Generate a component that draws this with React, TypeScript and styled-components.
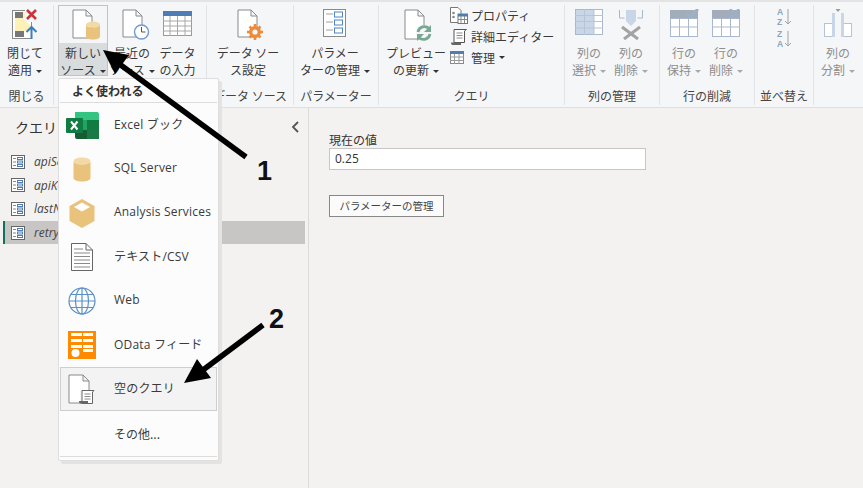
import styled, { createGlobalStyle } from 'styled-components';

const GlobalStyle = createGlobalStyle`
  html, body {
    margin: 0;
    padding: 0;
    background: #f3f2f1;
  }
  * {
    box-sizing: border-box;
  }
`;

const FONT = `"Noto Sans CJK JP", "Noto Sans", sans-serif`;
const LATIN_FONT = `"Open Sans", "Noto Sans CJK JP", sans-serif`;

const Page = styled.div`
  position: relative;
  width: 863px;
  height: 488px;
  overflow: hidden;
  background: #f3f2f1;
  color: #333;
  font-family: ${FONT};
  font-size: 12px;
`;

const Ribbon = styled.div`
  display: flex;
  height: 108px;
  padding: 3px 0 2px;
  background: #f5f6f8;
  border-top: 2px solid #e4e4e4;
  border-bottom: 1px solid #e1dfdd;
`;

const Group = styled.div<{ $width: number; $last?: boolean }>`
  flex: none;
  display: flex;
  flex-direction: column;
  width: ${p => p.$width}px;
  border-right: ${p => (p.$last ? 'none' : '1px solid #e1e3e6')};
`;

const GroupBody = styled.div<{ $pad?: number }>`
  flex: 1;
  display: flex;
  padding-left: ${p => p.$pad ?? 0}px;
`;

const GroupLabel = styled.div`
  height: 20px;
  padding-top: 2px;
  line-height: 18px;
  text-align: center;
  font-size: 12px;
  color: #444;
  white-space: nowrap;
`;

const BigButton = styled.div<{ $width: number; $disabled?: boolean }>`
  flex: none;
  display: flex;
  flex-direction: column;
  align-items: center;
  width: ${p => p.$width}px;
  color: ${p => (p.$disabled ? '#8d8d8d' : '#3a3a3a')};
`;

const IconSlot = styled.div<{ $active?: boolean }>`
  width: 100%;
  height: 38px;
  display: flex;
  align-items: flex-start;
  justify-content: center;
  padding-top: 3px;
  border: 1px solid ${p => (p.$active ? '#c2c2c2' : 'transparent')};
  border-bottom: none;
`;

const ButtonText = styled.div<{ $active?: boolean }>`
  width: 100%;
  height: 33px;
  padding-top: 1px;
  text-align: center;
  line-height: 17px;
  font-size: 12px;
  white-space: nowrap;
  background: ${p => (p.$active ? '#d9dcdc' : 'transparent')};
  border: 1px solid ${p => (p.$active ? '#c2c2c2' : 'transparent')};
  border-top: none;
`;

const Line = styled.div`
  height: 17px;
`;

const Caret = styled.span<{ $disabled?: boolean }>`
  display: inline-block;
  width: 0;
  height: 0;
  margin-left: 4px;
  vertical-align: 2px;
  border-left: 3px solid transparent;
  border-right: 3px solid transparent;
  border-top: 3px solid ${p => (p.$disabled ? '#a8a8a8' : '#333')};
`;

const SmallStack = styled.div`
  flex: none;
  display: flex;
  flex-direction: column;
  width: 112px;
`;

const SmallButton = styled.div`
  display: flex;
  align-items: center;
  height: 21px;
  font-size: 12px;
  color: #3a3a3a;
  white-space: nowrap;
`;

const SmallIcon = styled.span`
  flex: none;
  display: flex;
  width: 21px;
`;

const SortStack = styled.div`
  display: flex;
  flex-direction: column;
  gap: 4px;
  padding: 3px 0 0 22px;
`;

const Body = styled.div`
  display: flex;
  height: 380px;
`;

const Sidebar = styled.div`
  flex: none;
  width: 309px;
  padding: 9px 3px 0;
  border-right: 1px solid #dcdad8;
`;

const SidebarHeader = styled.div`
  display: flex;
  align-items: center;
  justify-content: space-between;
  height: 20px;
  padding: 0 5px 0 12px;
  margin-bottom: 13px;
  font-size: 14px;
  color: #333;
`;

const QueryRow = styled.div<{ $selected?: boolean }>`
  display: flex;
  align-items: center;
  gap: 9px;
  height: 23.6px;
  padding-left: 8px;
  font-size: 12px;
  font-style: italic;
  font-family: "Open Sans", "Noto Sans", sans-serif;
  color: #444;
  background: ${p => (p.$selected ? '#c8c6c4' : 'transparent')};
  box-shadow: ${p => (p.$selected ? 'inset 2px 0 0 #12705c' : 'none')};
`;

const Content = styled.div`
  flex: 1;
  padding: 23px 20px 0;
`;

const FieldLabel = styled.div`
  height: 17px;
  line-height: 17px;
  font-size: 12px;
  color: #333;
`;

const ValueBox = styled.div`
  width: 317px;
  height: 22px;
  padding-left: 5px;
  line-height: 20px;
  font-family: "Open Sans", "Noto Sans", sans-serif;
  font-size: 12px;
  color: #333;
  background: #fff;
  border: 1px solid #c8c6c4;
`;

const ManageButton = styled.div`
  width: 115px;
  height: 22px;
  margin-top: 25px;
  line-height: 20px;
  text-align: center;
  font-size: 10.5px;
  color: #444;
  background: #fbfbfb;
  border: 1px solid #8a8886;
`;

const Menu = styled.div`
  position: absolute;
  left: 58px;
  top: 78px;
  width: 161px;
  height: 383px;
  padding: 1px 1px 0;
  background: #fcfcfc;
  border: 1px solid #dedede;
  border-radius: 2px;
  box-shadow: 3px 3px 0 #e4e3e2;
`;

const MenuHeader = styled.div`
  height: 23px;
  line-height: 21px;
  padding-left: 12px;
  font-weight: 700;
  font-size: 12px;
  color: #333;
  border-bottom: 1px solid #dcdcdc;
`;

const MenuItem = styled.div<{ $hover?: boolean }>`
  display: flex;
  align-items: center;
  height: 44px;
  font-size: 12px;
  color: #3a3a3a;
  white-space: nowrap;
  background: ${p => (p.$hover ? '#f3f3f3' : 'transparent')};
  outline: ${p => (p.$hover ? '1px solid #cfcfcf' : 'none')};
  outline-offset: -1px;
`;

const MenuIcon = styled.div`
  flex: none;
  width: 44px;
  display: flex;
  justify-content: center;
`;

const MenuLabel = styled.span`
  padding: 0 0 3px 10px;
  font-family: ${LATIN_FONT};
  letter-spacing: 0.2px;
`;

const MenuFooter = styled.div`
  display: flex;
  align-items: center;
  height: 46px;
  padding-left: 54px;
  font-size: 12px;
  color: #3a3a3a;
  border-bottom: 1px solid #dcdcdc;
`;

const ArrowLayer = styled.svg`
  position: absolute;
  left: 0;
  top: 0;
  pointer-events: none;
`;

const Callout = styled.div<{ $x: number; $y: number }>`
  position: absolute;
  left: ${p => p.$x}px;
  top: ${p => p.$y}px;
  font-family: "Liberation Sans", Arial, sans-serif;
  font-weight: 700;
  font-size: 27px;
  line-height: 30px;
  color: #111;
`;

const Sheet = ({ w = 28, h = 32 }: { w?: number; h?: number }) => (
  <path
    d={`M1 1H${w - 7}L${w - 1} 7V${h - 1}H1Z M${w - 7} 1V7H${w - 1}`}
    fill="#fff"
    stroke="#8a8a8a"
    strokeWidth="1"
  />
);

const CloseApplyIcon = () => (
  <svg width="26" height="30" viewBox="0 0 26 30">
    <rect x="0.500" y="1.500" width="19" height="28" fill="#fff" stroke="#8a8a8a" />
    <rect x="3" y="3" width="8" height="6" fill="#777" />
    <path d="M3 9h8v0l8 8v5H3Z" fill="#fdf0b8" />
    <path d="M11 3h5v6l-5 0Z" fill="#fdf0b8" />
    <rect x="3" y="22" width="9" height="6" fill="#777" />
    <rect x="13" y="0" width="13" height="13" fill="#f5f6f8" />
    <path d="M15 1l9 9M24 1l-9 9" stroke="#c8353a" strokeWidth="2.600" />
    <path d="M19.500 30V19M14.500 23l5-5 5 5" fill="none" stroke="#3c7fc0" strokeWidth="2" />
  </svg>
);

const NewSourceIcon = () => (
  <svg width="36" height="32" viewBox="-7 0 36 32">
    <Sheet w={21} h={30} />
    <ellipse cx="21" cy="15.500" rx="7" ry="3" fill="#f3d9a4" />
    <path d="M14 15.500v12c0 2 3 3 7 3s7-1 7-3v-12c0 2-3 3-7 3s-7-1-7-3Z" fill="#e9c27c" />
  </svg>
);

const RecentIcon = () => (
  <svg width="36" height="32" viewBox="-8 0 36 32">
    <Sheet w={21} h={29} />
    <circle cx="19.500" cy="23" r="7" fill="#fff" stroke="#6f9ad0" strokeWidth="1.400" />
    <path d="M19.500 18v5h4" fill="none" stroke="#555" />
  </svg>
);

const TableIcon = () => (
  <svg width="29" height="30" viewBox="0 -2 29 30">
    <rect x="0.500" y="0.500" width="28" height="24" fill="#fff" stroke="#9a9a9a" />
    <rect x="0" y="0" width="29" height="5" fill="#4f7cb3" />
    <path d="M0 10h29M0 15h29M0 20h29M7 5v20M14.500 5v20M22 5v20" stroke="#a8a8a8" />
  </svg>
);

const SettingsIcon = () => (
  <svg width="38" height="32" viewBox="-8 0 38 32">
    <Sheet w={21} h={29} />
    <circle cx="18" cy="23" r="4.300" fill="#f5f6f8" stroke="#ed8b3c" strokeWidth="3.400" />
    <path
      d="M18 15v3M18 28v3M10 23h3M23 23h3M12.500 17.500l2 2M21.500 26.500l2 2M23.500 17.500l-2 2M14.500 26.500l-2 2"
      stroke="#ed8b3c"
      strokeWidth="2.600"
    />
  </svg>
);

const ParamIcon = () => (
  <svg width="24" height="29" viewBox="0 0 24 29">
    <rect x="0.500" y="0.500" width="22" height="27" fill="#fff" stroke="#8a8a8a" />
    <path d="M3 5h7M3 13h7M3 21h7" stroke="#a0a0a0" />
    <rect x="11.500" y="3" width="8" height="5" fill="#fff" stroke="#4f86c6" />
    <rect x="11.500" y="11" width="8" height="5" fill="#fff" stroke="#4f86c6" />
    <rect x="11.500" y="19" width="8" height="5" fill="#fff" stroke="#4f86c6" />
  </svg>
);

const RefreshIcon = () => (
  <svg width="36" height="33" viewBox="-6 0 36 33">
    <Sheet w={21} h={31} />
    <circle cx="20" cy="24" r="8" fill="#f5f6f8" />
    <path d="M14 23a6.500 6.500 0 0 1 11-3.500M26 25a6.500 6.500 0 0 1-11 3.500" fill="none" stroke="#76a893" strokeWidth="2.800" />
    <path d="M27 16v7h-7ZM13 32v-7h7Z" fill="#76a893" />
  </svg>
);

const PropertyIcon = () => (
  <svg width="18" height="17" viewBox="0 0 18 17">
    <path d="M0.500 0.500H8L11 3.500V15.500H0.500Z" fill="#fff" stroke="#777" />
    <circle cx="3.500" cy="6" r="1.300" fill="#888" />
    <circle cx="3.500" cy="10" r="1.300" fill="#888" />
    <rect x="8" y="7" width="9.500" height="9.500" fill="#fff" stroke="#777" />
    <rect x="8" y="7" width="9.500" height="2.500" fill="#4f7cb3" />
    <path d="M11 9v7M14.500 9v7M8 12.500h9" stroke="#888" />
  </svg>
);

const ScrollIcon = () => (
  <svg width="18" height="18" viewBox="0 0 18 18">
    <path d="M4 1.500H16.500L14.500 3V14.500H4Z" fill="#fff" stroke="#555" />
    <path d="M6.500 5h6M6.500 7.500h6M6.500 10h6" stroke="#888" />
    <path d="M1 14.500H11V17H2.500C1.500 17 1 16 1 14.500Z" fill="#666" />
  </svg>
);

const SmallTableIcon = () => (
  <svg width="14" height="13" viewBox="0 0 14 13">
    <rect x="0.500" y="0.500" width="13" height="12" fill="#fff" stroke="#888" />
    <rect x="0" y="0" width="14" height="3" fill="#4f7cb3" />
    <path d="M0 6h14M0 9.500h14M4.500 3v10M9 3v10" stroke="#999" />
  </svg>
);

const ChooseColsIcon = () => (
  <svg width="28" height="27" viewBox="0 0 28 27">
    <rect x="0.500" y="0.500" width="27" height="25" fill="#fff" stroke="#a9b8cf" />
    <rect x="1" y="1" width="18" height="24" fill="#c9d6e8" />
    <path d="M0 6.500h28M0 12.500h28M0 19h28M9.500 0v26M19 0v26" stroke="#b7c5d9" />
  </svg>
);

const RemoveColsIcon = () => (
  <svg width="24" height="31" viewBox="0 0 24 31">
    <path d="M0.500 1v8h5M23.500 1v8h-5" fill="none" stroke="#a9b8cf" />
    <path d="M7 1h10v11l-5 5-5-5Z" fill="#c9d6e8" />
    <path d="M3 18l16 12M21 18L5 30" stroke="#a3a3a3" strokeWidth="3" />
  </svg>
);

const RowsIcon = ({ mark }: { mark: 'keep' | 'remove' }) => (
  <svg width="29" height="29" viewBox="0 0 29 29">
    <rect x="0.500" y="9.500" width="27" height="18" fill="#fff" stroke="#a9b8cf" />
    <path d="M0 18h28M9.500 9v18M18.500 9v18" stroke="#a9b8cf" />
    <rect x="0" y="1" width="28" height="8" fill="#a3adba" />
    {mark === 'keep' ? (
      <path d="M16 4l4 4 8-8" fill="none" stroke="#9eb0c6" strokeWidth="3" />
    ) : (
      <path d="M18 0l9 9M27 0l-9 9" stroke="#9eb0c6" strokeWidth="2.400" />
    )}
  </svg>
);

const SortGlyph = ({ top, bottom }: { top: string; bottom: string }) => (
  <svg width="17" height="18" viewBox="0 0 17 18">
    <text x="0" y="7" fontSize="8.500" fontWeight="700" fontFamily="Liberation Sans, sans-serif" fill="#8fa3bd">
      {top}
    </text>
    <text x="0" y="17" fontSize="8.500" fontWeight="700" fontFamily="Liberation Sans, sans-serif" fill="#8fa3bd">
      {bottom}
    </text>
    <path d="M11 1v15M8 13l3 3 3-3" fill="none" stroke="#a0a0a0" />
  </svg>
);

const SplitIcon = () => (
  <svg width="28" height="29" viewBox="0 0 28 29">
    <rect x="0.500" y="14.500" width="8" height="13" fill="#fff" stroke="#b6c3d6" />
    <rect x="19.500" y="14.500" width="8" height="13" fill="#fff" stroke="#b6c3d6" />
    <rect x="8" y="4" width="3" height="24" fill="#c9d6e8" />
    <rect x="17" y="4" width="3" height="24" fill="#c9d6e8" />
    <path d="M11.500 0h5L14 3Z" fill="#9a9a9a" />
  </svg>
);

const QueryIcon = () => (
  <svg width="14" height="14" viewBox="0 0 14 14">
    <rect x="0.500" y="0.500" width="13" height="13" fill="#fff" stroke="#666" />
    <path d="M2 3.500h3M2 7h3M2 10.500h3" stroke="#888" />
    <rect x="6.500" y="2.500" width="5" height="2" fill="#fff" stroke="#4f7cb3" />
    <rect x="6.500" y="6" width="5" height="2" fill="#fff" stroke="#4f7cb3" />
    <rect x="6.500" y="9.500" width="5" height="2" fill="#fff" stroke="#4f7cb3" />
  </svg>
);

const ExcelIcon = () => (
  <svg width="33" height="29" viewBox="0 0 33 29">
    <path d="M9 1h22a2 2 0 0 1 2 2v6H9Z" fill="#33c481" />
    <rect x="9" y="9" width="12" height="10" fill="#21a366" />
    <rect x="21" y="9" width="12" height="10" fill="#107c41" />
    <path d="M9 19h24v7a2 2 0 0 1-2 2H11a2 2 0 0 1-2-2Z" fill="#185c37" />
    <rect x="21" y="19" width="12" height="9" fill="#1a7a47" />
    <rect x="0" y="7" width="17" height="15" rx="1" fill="#107c41" />
    <path d="M5 10.500l6.500 8M11.500 10.500l-6.500 8" stroke="#fff" strokeWidth="2" />
  </svg>
);

const CylinderIcon = () => (
  <svg width="18" height="25" viewBox="0 0 18 25">
    <ellipse cx="9" cy="4" rx="8.500" ry="3.500" fill="#f3d9a4" />
    <path d="M0.500 4v17c0 2 4 3.500 8.500 3.500s8.500-1.500 8.500-3.500V4c0 2-4 3.500-8.500 3.500S0.500 6 0.500 4Z" fill="#e9c27c" />
  </svg>
);

const CubeIcon = () => (
  <svg width="26" height="29" viewBox="0 0 26 29">
    <path d="M13 0l12.500 7v15L13 29 0.500 22V7Z" fill="#e9c27c" />
    <path d="M13 3.500l8 4.500-8 4.500-8-4.500Z" fill="#fff" />
  </svg>
);

const TextFileIcon = () => (
  <svg width="22" height="28" viewBox="0 0 22 28">
    <path d="M0.500 0.500H15L21.500 7V27.500H0.500Z M15 0.500V7H21.500" fill="#fff" stroke="#666" />
    <path d="M3 6h9M3 10h16M3 13.500h16M3 17h16M3 20.500h16M3 24h16" stroke="#8a8a8a" />
  </svg>
);

const GlobeIcon = () => (
  <svg width="28" height="28" viewBox="0 0 28 28" fill="none" stroke="#5b8fc7" strokeWidth="1.200">
    <circle cx="14" cy="14" r="13" />
    <ellipse cx="14" cy="14" rx="6.500" ry="13" />
    <path d="M14 1v26M1 14h26M3 7.500h22M3 20.500h22" />
  </svg>
);

const ODataIcon = () => (
  <svg width="28" height="28" viewBox="0 0 28 28">
    <rect width="28" height="28" fill="#ff8a00" />
    <path d="M3 2h11v3H3ZM15 2h10v3H15ZM3 8h11v3H3ZM15 8h10v3H15ZM3 14h11v3H3ZM15 14h10v3H15Z" fill="#fff" />
    <path d="M15 18h10v3H15Z" fill="#fff" />
    <circle cx="7.500" cy="22" r="4" fill="#fff" />
  </svg>
);

const BlankQueryIcon = () => (
  <svg width="28" height="30" viewBox="0 0 28 30">
    <path d="M1 1H15L21 7V29H1Z M15 1V7H21" fill="#fff" stroke="#8a8a8a" />
    <rect x="12" y="16" width="15" height="13" fill="#f3f3f3" />
    <path d="M14 16.500H26L24.500 18V29.500H14Z" fill="#fff" stroke="#666" />
    <path d="M16.500 20h6M16.500 22.500h6M16.500 25h6" stroke="#888" />
    <path d="M11 27H20V29.500H12C11.500 29.500 11 28.500 11 27Z" fill="#666" />
  </svg>
);

const ChevronLeft = () => (
  <svg width="9" height="12" viewBox="0 0 9 12">
    <path d="M7 1L2 6l5 5" fill="none" stroke="#555" strokeWidth="1.800" />
  </svg>
);

const queries = ['apiServer', 'apiKey', 'lastNDays', 'retryRate'];

const menuItems = [
  { label: 'Excel ブック', icon: <ExcelIcon /> },
  { label: 'SQL Server', icon: <CylinderIcon /> },
  { label: 'Analysis Services', icon: <CubeIcon /> },
  { label: 'テキスト/CSV', icon: <TextFileIcon /> },
  { label: 'Web', icon: <GlobeIcon /> },
  { label: 'OData フィード', icon: <ODataIcon /> },
  { label: '空のクエリ', icon: <BlankQueryIcon />, hover: true },
];

export default function App() {
  return (
    <Page>
      <GlobalStyle />
      <Ribbon>
        <Group $width={54}>
          <GroupBody>
            <BigButton $width={50}>
              <IconSlot><CloseApplyIcon /></IconSlot>
              <ButtonText>
                <Line>閉じて</Line>
                <Line>適用<Caret /></Line>
              </ButtonText>
            </BigButton>
          </GroupBody>
          <GroupLabel>閉じる</GroupLabel>
        </Group>

        <Group $width={153}>
          <GroupBody $pad={4}>
            <BigButton $width={50}>
              <IconSlot $active><NewSourceIcon /></IconSlot>
              <ButtonText $active>
                <Line>新しい</Line>
                <Line>ソース<Caret /></Line>
              </ButtonText>
            </BigButton>
            <BigButton $width={48}>
              <IconSlot><RecentIcon /></IconSlot>
              <ButtonText>
                <Line>最近の</Line>
                <Line>ソース<Caret /></Line>
              </ButtonText>
            </BigButton>
            <BigButton $width={43}>
              <IconSlot><TableIcon /></IconSlot>
              <ButtonText>
                <Line>データ</Line>
                <Line>の入力</Line>
              </ButtonText>
            </BigButton>
          </GroupBody>
          <GroupLabel />
        </Group>

        <Group $width={87}>
          <GroupBody $pad={1}>
            <BigButton $width={80}>
              <IconSlot><SettingsIcon /></IconSlot>
              <ButtonText>
                <Line>データ ソー</Line>
                <Line>ス設定</Line>
              </ButtonText>
            </BigButton>
          </GroupBody>
          <GroupLabel>データ ソース</GroupLabel>
        </Group>

        <Group $width={85}>
          <GroupBody>
            <BigButton $width={82}>
              <IconSlot><ParamIcon /></IconSlot>
              <ButtonText>
                <Line>パラメー</Line>
                <Line>ターの管理<Caret /></Line>
              </ButtonText>
            </BigButton>
          </GroupBody>
          <GroupLabel>パラメーター</GroupLabel>
        </Group>

        <Group $width={186}>
          <GroupBody $pad={3}>
            <BigButton $width={68}>
              <IconSlot><RefreshIcon /></IconSlot>
              <ButtonText>
                <Line>プレビュー</Line>
                <Line>の更新<Caret /></Line>
              </ButtonText>
            </BigButton>
            <SmallStack>
              <SmallButton><SmallIcon><PropertyIcon /></SmallIcon>プロパティ</SmallButton>
              <SmallButton><SmallIcon><ScrollIcon /></SmallIcon>詳細エディター</SmallButton>
              <SmallButton><SmallIcon><SmallTableIcon /></SmallIcon>管理<Caret /></SmallButton>
            </SmallStack>
          </GroupBody>
          <GroupLabel>クエリ</GroupLabel>
        </Group>

        <Group $width={95}>
          <GroupBody $pad={3}>
            <BigButton $width={42} $disabled>
              <IconSlot><ChooseColsIcon /></IconSlot>
              <ButtonText>
                <Line>列の</Line>
                <Line>選択<Caret $disabled /></Line>
              </ButtonText>
            </BigButton>
            <BigButton $width={42} $disabled>
              <IconSlot><RemoveColsIcon /></IconSlot>
              <ButtonText>
                <Line>列の</Line>
                <Line>削除<Caret $disabled /></Line>
              </ButtonText>
            </BigButton>
          </GroupBody>
          <GroupLabel>列の管理</GroupLabel>
        </Group>

        <Group $width={95}>
          <GroupBody $pad={3}>
            <BigButton $width={42} $disabled>
              <IconSlot><RowsIcon mark="keep" /></IconSlot>
              <ButtonText>
                <Line>行の</Line>
                <Line>保持<Caret $disabled /></Line>
              </ButtonText>
            </BigButton>
            <BigButton $width={42} $disabled>
              <IconSlot><RowsIcon mark="remove" /></IconSlot>
              <ButtonText>
                <Line>行の</Line>
                <Line>削除<Caret $disabled /></Line>
              </ButtonText>
            </BigButton>
          </GroupBody>
          <GroupLabel>行の削減</GroupLabel>
        </Group>

        <Group $width={59}>
          <GroupBody>
            <SortStack>
              <SortGlyph top="A" bottom="Z" />
              <SortGlyph top="Z" bottom="A" />
            </SortStack>
          </GroupBody>
          <GroupLabel>並べ替え</GroupLabel>
        </Group>

        <Group $width={49} $last>
          <GroupBody>
            <BigButton $width={48} $disabled>
              <IconSlot><SplitIcon /></IconSlot>
              <ButtonText>
                <Line>列の</Line>
                <Line>分割<Caret $disabled /></Line>
              </ButtonText>
            </BigButton>
          </GroupBody>
          <GroupLabel />
        </Group>
      </Ribbon>

      <Body>
        <Sidebar>
          <SidebarHeader>
            クエリ
            <ChevronLeft />
          </SidebarHeader>
          {queries.map((q, i) => (
            <QueryRow key={q} $selected={i === 3}>
              <QueryIcon />
              {q}
            </QueryRow>
          ))}
        </Sidebar>
        <Content>
          <FieldLabel>現在の値</FieldLabel>
          <ValueBox>0.25</ValueBox>
          <ManageButton>パラメーターの管理</ManageButton>
        </Content>
      </Body>

      <Menu>
        <MenuHeader>よく使われる</MenuHeader>
        {menuItems.map(item => (
          <MenuItem key={item.label} $hover={item.hover}>
            <MenuIcon>{item.icon}</MenuIcon>
            <MenuLabel>{item.label}</MenuLabel>
          </MenuItem>
        ))}
        <MenuFooter>その他...</MenuFooter>
      </Menu>

      <ArrowLayer width="863" height="488" viewBox="0 0 863 488">
        <path d="M246 157L118 63" stroke="#000" strokeWidth="5.500" />
        <path d="M103 50L129 55L115 74Z" fill="#000" />
        <path d="M263 325L203 370" stroke="#000" strokeWidth="5.500" />
        <path d="M184 383L197 359L211 378Z" fill="#000" />
      </ArrowLayer>
      <Callout $x={257} $y={156}>1</Callout>
      <Callout $x={269} $y={304}>2</Callout>
    </Page>
  );
}
